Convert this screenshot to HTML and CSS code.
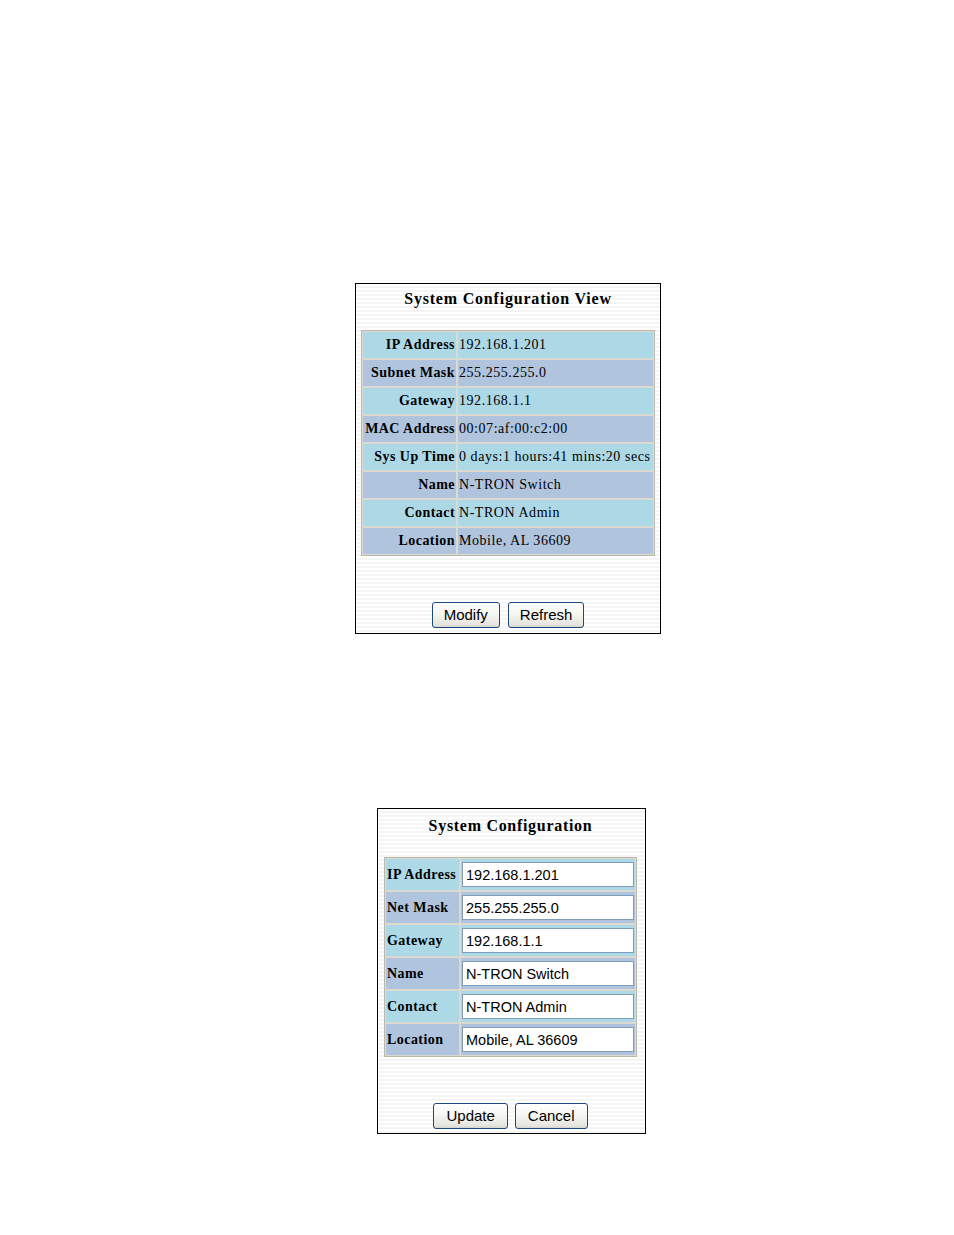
FILE: index.html
```html
<!DOCTYPE html>
<html>
<head>
<meta charset="utf-8">
<title>System Configuration</title>
<link rel="stylesheet" href="styles.css">
</head>
<body>
<div class="page">
  <div class="panel panel-view">
    <div class="title">System Configuration View</div>
    <table class="grid grid-view">
      <tr class="r1"><th>IP Address</th><td>192.168.1.201</td></tr>
      <tr class="r2"><th>Subnet Mask</th><td>255.255.255.0</td></tr>
      <tr class="r1"><th>Gateway</th><td>192.168.1.1</td></tr>
      <tr class="r2"><th>MAC Address</th><td>00:07:af:00:c2:00</td></tr>
      <tr class="r1"><th>Sys Up Time</th><td>0 days:1 hours:41 mins:20 secs</td></tr>
      <tr class="r2"><th>Name</th><td>N-TRON Switch</td></tr>
      <tr class="r1"><th>Contact</th><td>N-TRON Admin</td></tr>
      <tr class="r2"><th>Location</th><td>Mobile, AL 36609</td></tr>
    </table>
    <div class="actions">
      <button class="btn" type="button">Modify</button>
      <button class="btn" type="button">Refresh</button>
    </div>
  </div>

  <div class="panel panel-edit">
    <div class="title">System Configuration</div>
    <table class="grid grid-edit">
      <tr class="r1"><th>IP Address</th><td><input class="field" type="text" value="192.168.1.201"></td></tr>
      <tr class="r2"><th>Net Mask</th><td><input class="field" type="text" value="255.255.255.0"></td></tr>
      <tr class="r1"><th>Gateway</th><td><input class="field" type="text" value="192.168.1.1"></td></tr>
      <tr class="r2"><th>Name</th><td><input class="field" type="text" value="N-TRON Switch"></td></tr>
      <tr class="r1"><th>Contact</th><td><input class="field" type="text" value="N-TRON Admin"></td></tr>
      <tr class="r2"><th>Location</th><td><input class="field" type="text" value="Mobile, AL 36609"></td></tr>
    </table>
    <div class="actions">
      <button class="btn" type="button">Update</button>
      <button class="btn" type="button">Cancel</button>
    </div>
  </div>
</div>
</body>
</html>
```

FILE: styles.css
```css
html, body {
  margin: 0;
  padding: 0;
  background: #ffffff;
}

.page {
  padding-top: 283px;
  font-family: "Liberation Serif", "Times New Roman", serif;
  color: #000;
}

.panel {
  box-sizing: border-box;
  border: 1px solid #000;
  background: repeating-linear-gradient(to bottom, #ffffff 0, #ffffff 2px, #f5f5f5 2px, #f5f5f5 4px);
}

.panel-view {
  margin-left: 355px;
  width: 306px;
  padding: 6px 5px 5px 5px;
}

.panel-edit {
  margin-left: 377px;
  margin-top: 174px;
  width: 269px;
  padding: 8px 8px 4px 6px;
}

.title {
  font-size: 16px;
  font-weight: bold;
  line-height: 18px;
  text-align: center;
  letter-spacing: 0.8px;
  margin-bottom: 22px;
}

.panel-edit .title {
  letter-spacing: 0.7px;
}

.grid {
  border-collapse: separate;
  border-spacing: 2px;
  background: #dcd9d0;
  box-shadow: inset 0 0 0 1px #bcb8ac;
  font-size: 14px;
  table-layout: fixed;
}

.grid th,
.grid td {
  padding: 0;
  vertical-align: middle;
  white-space: nowrap;
  overflow: hidden;
}

.grid th {
  font-weight: bold;
  letter-spacing: 0.45px;
}

.r1 th, .r1 td { background: #add8e6; }
.r2 th, .r2 td { background: #b0c4de; }

.grid-view {
  width: 294px;
}

.grid-view th {
  width: 93px;
  height: 26px;
  text-align: right;
  padding-right: 1px;
  box-sizing: border-box;
}

.grid-view td {
  padding-left: 1px;
  letter-spacing: 0.55px;
}

.grid-edit {
  width: 253px;
}

.grid-edit th {
  width: 73px;
  height: 31px;
  text-align: left;
  padding-left: 1px;
  box-sizing: border-box;
}

.grid-edit td {
  padding: 0 1px;
}

.field {
  display: block;
  box-sizing: border-box;
  width: 172px;
  height: 25px;
  margin: 0;
  padding: 0 3px;
  border: 1px solid #7f9db9;
  background: #fff;
  font-family: "Liberation Sans", Arial, sans-serif;
  font-size: 14.5px;
  color: #000;
  outline: none;
}

.actions {
  display: flex;
  justify-content: center;
  gap: 7px;
  margin-top: 46px;
}

.panel-view .actions {
  gap: 8px;
}

.btn {
  box-sizing: border-box;
  height: 26px;
  margin: 0;
  padding: 0 11px;
  border: 1px solid #1c4a80;
  border-radius: 3px;
  background: linear-gradient(to bottom, #ffffff 0%, #f6f6f2 45%, #e6e5de 90%, #d6d4ca 100%);
  font-family: "Liberation Sans", Arial, sans-serif;
  font-size: 15px;
  color: #000;
  line-height: 24px;
}

.panel-edit .btn {
  padding: 0 12px;
}
```
